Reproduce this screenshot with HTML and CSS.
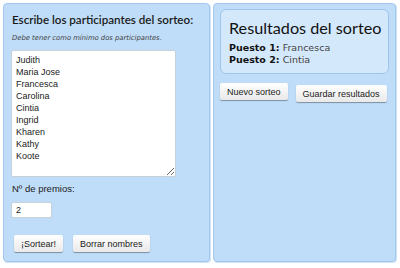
FILE: index.html
```html
<!DOCTYPE html>
<html lang="es">
<head>
    <meta charset="UTF-8">
    <meta name="viewport" content="width=device-width, initial-scale=1.0">
    <title>Sorteo</title>
    <link rel="stylesheet" href="styles.css">
</head>
<body>
    <div class="panel panel-left">
        <h2>Escribe los participantes del sorteo:</h2>
        <p class="hint">Debe tener como mínimo dos participantes.</p>
        <textarea id="participantes">Judith
Maria Jose
Francesca
Carolina
Cintia
Ingrid
Kharen
Kathy
Koote</textarea>
        <label for="premios">Nº de premios:</label>
        <input type="text" id="premios" value="2">
        <div class="actions">
            <button>¡Sortear!</button>
            <button>Borrar nombres</button>
        </div>
    </div>

    <div class="panel panel-right">
        <div class="results">
            <h1>Resultados del sorteo</h1>
            <div class="place"><b>Puesto 1:</b> Francesca</div>
            <div class="place"><b>Puesto 2:</b> Cintia</div>
        </div>
        <div class="actions actions-right">
            <button>Nuevo sorteo</button>
            <button class="lower">Guardar resultados</button>
        </div>
    </div>
</body>
</html>
```

FILE: styles.css
```css
body {
    margin: 0;
    padding: 3px;
    display: flex;
    gap: 3px;
    background: #fff;
    font-family: "Liberation Sans", Arial, sans-serif;
    color: #222;
}
.panel {
    box-sizing: border-box;
    height: 259px;
    background-color: #bfdcf8;
    border: 1px solid #a3c8ef;
    border-radius: 4px;
    box-shadow: 1px 1px 0 #cfe3f7;
    display: flex;
    flex-direction: column;
    align-items: flex-start;
}
.panel-left {
    width: 207px;
    padding: 0 7px;
}
.panel-right {
    width: 183px;
    padding: 5px 6px;
}
h2 {
    font-family: "Lato", sans-serif;
    font-weight: 600;
    font-size: 11.6px;
    line-height: 16px;
    margin: 8px 0 0 1px;
    white-space: nowrap;
    color: #1a1a1a;
}
.hint {
    font-family: "DejaVu Sans", sans-serif;
    font-style: italic;
    font-size: 6.8px;
    line-height: 10px;
    margin: 5px 0 0 1px;
    color: #444;
}
textarea {
    box-sizing: border-box;
    width: 165px;
    height: 127px;
    margin: 7px 0 0 0;
    padding: 3px 4px;
    border: 1px solid #c8d0d8;
    border-radius: 2px;
    font-family: "Liberation Sans", Arial, sans-serif;
    font-size: 9px;
    line-height: 12px;
    color: #222;
    resize: vertical;
    outline: none;
}
label {
    font-size: 9.5px;
    line-height: 12px;
    margin: 6px 0 0 1px;
    color: #222;
}
input {
    box-sizing: border-box;
    width: 41px;
    height: 16px;
    margin: 7px 0 0 0;
    padding: 0 4px;
    border: 1px solid #c8d0d8;
    border-radius: 2px;
    font-family: "Liberation Sans", Arial, sans-serif;
    font-size: 9px;
    color: #222;
}
.actions {
    display: flex;
    gap: 10px;
    margin: 17px 0 0 3px;
    align-items: flex-start;
}
.actions-right {
    gap: 8px;
    margin: 9px 0 0 0;
}
button {
    height: 17px;
    padding: 0 7px;
    border: none;
    border-radius: 2px;
    background: linear-gradient(#ffffff, #e9e9e9);
    box-shadow: 0 1px 1px rgba(0, 0, 0, 0.35);
    font-family: "Liberation Sans", Arial, sans-serif;
    font-size: 9px;
    color: #222;
    cursor: pointer;
}
button.lower {
    margin-top: 2px;
}
.results {
    box-sizing: border-box;
    width: 169px;
    height: 65px;
    padding: 0 8px;
    background-color: #d4e8fb;
    border: 1px solid #9ec5ec;
    border-radius: 6px;
}
h1 {
    font-family: "Lato", sans-serif;
    font-weight: normal;
    font-size: 16.2px;
    line-height: 20px;
    margin: 8px 0 4px 0;
    white-space: nowrap;
    color: #111;
}
.place {
    font-family: "DejaVu Sans", sans-serif;
    font-size: 9.5px;
    line-height: 12px;
    color: #444;
}
.place b {
    color: #111;
}
```
